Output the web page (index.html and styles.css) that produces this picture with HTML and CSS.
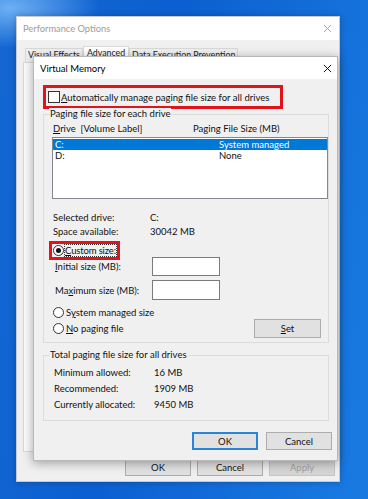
FILE: index.html
```html
<!DOCTYPE html>
<html>
<head>
<meta charset="utf-8">
<link rel="stylesheet" href="styles.css">
</head>
<body>
<div class="desktop">
  <div class="win po">
    <div class="po-title">
      <span>Performance Options</span>
      <svg class="close close-dim" viewBox="0 0 10 10"><path d="M1 1L9 9M9 1L1 9"/></svg>
    </div>
    <div class="po-body">
      <div class="tabs">
        <span class="tab">Visual Effects</span>
        <span class="tab active">Advanced</span>
        <span class="tab">Data Execution Prevention</span>
      </div>
      <div class="tabpage"></div>
      <div class="po-buttons">
        <span class="btn po-btn">OK</span>
        <span class="btn po-btn">Cancel</span>
        <span class="btn po-btn disabled">Apply</span>
      </div>
    </div>
  </div>

  <div class="win vm">
    <div class="vm-title">
      <span>Virtual Memory</span>
      <svg class="close" viewBox="0 0 10 10"><path d="M1 1L9 9M9 1L1 9"/></svg>
    </div>
    <div class="vm-body">
      <div class="auto-box">
        <span class="checkbox"></span>
        <span><u>A</u>utomatically manage paging file size for all drives</span>
      </div>

      <div class="group group-drive">
        <div class="group-title">Paging file size for each drive</div>
        <div class="list-head">
          <span class="col1"><u>D</u>rive&nbsp; [Volume Label]</span>
          <span>Paging File Size (MB)</span>
        </div>
        <div class="listbox">
          <div class="list-row selected"><span class="lcol1">C:</span><span>System managed</span></div>
          <div class="list-row"><span class="lcol1">D:</span><span>None</span></div>
        </div>
        <div class="info-row info-first"><span class="info-label">Selected drive:</span><span>C:</span></div>
        <div class="info-row"><span class="info-label">Space available:</span><span>30042 MB</span></div>

        <div class="custom-box">
          <span class="radio checked"></span>
          <span class="focus-text"><u>C</u>ustom size:</span>
        </div>
        <div class="size-row size-initial">
          <span class="size-label"><u>I</u>nitial size (MB):</span>
          <span class="textbox"></span>
        </div>
        <div class="size-row size-max">
          <span class="size-label">Ma<u>x</u>imum size (MB):</span>
          <span class="textbox"></span>
        </div>
        <div class="radio-row sys-row">
          <span class="radio"></span>
          <span>S<u>y</u>stem managed size</span>
        </div>
        <div class="radio-row nopage-row">
          <span class="radio"></span>
          <span class="nopage-text"><u>N</u>o paging file</span>
          <span class="btn set-btn"><u>S</u>et</span>
        </div>
      </div>

      <div class="group group-total">
        <div class="group-title">Total paging file size for all drives</div>
        <div class="total-rows">
          <span class="total-label">Minimum allowed:</span><span>16 MB</span>
          <span class="total-label">Recommended:</span><span>1909 MB</span>
          <span class="total-label">Currently allocated:</span><span>9450 MB</span>
        </div>
      </div>

      <div class="vm-buttons">
        <span class="btn default">OK</span>
        <span class="btn">Cancel</span>
      </div>
    </div>
  </div>
</div>
</body>
</html>
```

FILE: styles.css
```css
* { box-sizing: border-box; }
html, body { margin: 0; padding: 0; }
body {
  width: 368px;
  height: 499px;
  overflow: hidden;
  font-family: Lato, "Noto Sans", sans-serif;
  font-size: 9.5px;
  color: #111;
}
u { text-decoration-thickness: 1px; text-underline-offset: 1px; }

.desktop {
  position: relative;
  width: 368px;
  height: 499px;
  background:
    radial-gradient(ellipse 90px 40px at 10px 8px, rgba(140, 200, 255, 0.75), rgba(140, 200, 255, 0) 100%),
    linear-gradient(100deg, #1467d2 0%, #0c5fd0 40%, #1572dc 80%, #1a7ae2 100%);
}

.win { position: absolute; }

/* ---------- Performance Options (background window) ---------- */
.po {
  left: 16px;
  top: 16px;
  width: 324px;
  height: 466px;
  background: #f0f0f0;
  border: 1px solid #c9c9c9;
  box-shadow: 0 0 6px rgba(0, 0, 0, 0.25);
  display: flex;
  flex-direction: column;
}
.po-title {
  height: 23px;
  background: #fff;
  display: flex;
  align-items: center;
  justify-content: space-between;
  padding: 0 6px 0 6px;
  color: #9c9c9c;
  font-size: 9.3px;
}
.close {
  width: 9px;
  height: 9px;
  stroke: #111;
  stroke-width: 1.1;
  fill: none;
}
.close-dim { stroke: #a8a8a8; margin-right: 1px; }

.po-body {
  flex: 1;
  display: flex;
  flex-direction: column;
  padding: 6px 4px 5px 6px;
}
.tabs {
  height: 16px;
  display: flex;
  align-items: flex-start;
  padding-left: 2px;
  font-size: 8.8px;
}
.tab {
  margin-top: 2px;
  height: 14px;
  padding: 0 2px;
  border: 1px solid #d9d9d9;
  border-bottom: none;
  background: #f0f0f0;
  line-height: 12px;
  color: #222;
  white-space: nowrap;
}
.tab.active {
  margin-top: 0;
  height: 16px;
  background: #fff;
  padding: 0 3px;
  line-height: 11px;
}
.tabpage {
  flex: 1;
  background: #fbfbfb;
  border: 1px solid #d9d9d9;
  margin-right: 2px;
}
.po-buttons {
  margin-top: 6px;
  display: flex;
  justify-content: flex-end;
  gap: 6px;
}
.po-btn { width: 57px; }

/* ---------- Buttons ---------- */
.btn {
  display: flex;
  align-items: center;
  justify-content: center;
  height: 18px;
  width: 66px;
  background: #e1e1e1;
  border: 1px solid #adadad;
  color: #111;
}
.btn.default { border: 2px solid #2a84d8; }
.btn.disabled { color: #a0a0a0; background: #d6d6d6; border-color: #c4c4c4; }

/* ---------- Virtual Memory dialog ---------- */
.vm {
  left: 33px;
  top: 56px;
  width: 305px;
  height: 405px;
  background: #f0f0f0;
  border: 1px solid #b9b9b9;
  box-shadow: 0 2px 10px rgba(0, 0, 0, 0.35);
  display: flex;
  flex-direction: column;
}
.vm-title {
  height: 22px;
  flex: none;
  background: #fff;
  display: flex;
  align-items: center;
  justify-content: space-between;
  padding: 0 5px 0 6px;
  font-size: 9.5px;
  color: #000;
}
.vm-body {
  flex: 1;
  padding: 6px 8px 0 9px;
  display: flex;
  flex-direction: column;
}

.auto-box {
  width: 240px;
  height: 24px;
  border: 3px solid #e1141c;
  display: flex;
  align-items: center;
  padding-left: 2px;
  gap: 1px;
  white-space: nowrap;
}
.checkbox {
  width: 12px;
  height: 12px;
  background: #fff;
  border: 1px solid #333;
  flex: none;
}

.group {
  border: 1px solid #dcdcdc;
  display: flex;
  flex-direction: column;
  align-items: flex-start;
}
.group-title {
  margin: -7px 0 0 -3px;
  padding: 0 1px;
  line-height: 12px;
  background: #f0f0f0;
  white-space: nowrap;
}
.group-drive {
  margin-top: 5px;
  padding: 0 0 4px 8px;
}
.list-head {
  margin-top: 3px;
  line-height: 12px;
  padding-left: 1px;
  display: flex;
  white-space: nowrap;
}
.col1 { width: 140px; }
.listbox {
  margin-top: 2px;
  align-self: stretch;
  height: 62px;
  background: #fff;
  border: 1px solid #828790;
  padding-top: 1px;
}
.list-row {
  height: 11px;
  line-height: 11px;
  padding-left: 2px;
  display: flex;
}
.list-row.selected { background: #0078d7; color: #fff; }
.lcol1 { width: 164px; }

.info-row { display: flex; line-height: 14px; padding-left: 1px; white-space: nowrap; }
.info-first { margin-top: 12px; }
.info-label { width: 97px; }

.custom-box {
  margin: 2px 0 0 -3px;
  width: 71px;
  height: 19px;
  border: 3px solid #e1141c;
  display: flex;
  align-items: center;
  padding-left: 1px;
  gap: 1px;
  white-space: nowrap;
}
.radio {
  width: 11px;
  height: 11px;
  border: 1px solid #333;
  border-radius: 50%;
  background: #fff;
  flex: none;
  display: flex;
  align-items: center;
  justify-content: center;
}
.radio.checked::after {
  content: "";
  width: 5px;
  height: 5px;
  border-radius: 50%;
  background: #111;
}
.focus-text {
  flex: none;
  outline: 1px dotted #333;
  outline-offset: 0;
  padding: 0;
  line-height: 11px;
  letter-spacing: -0.15px;
  white-space: nowrap;
}

.size-row { display: flex; align-items: center; padding-left: 3px; white-space: nowrap; }
.size-initial { margin-top: -3px; height: 19px; }
.size-max { margin-top: 4px; height: 20px; }
.size-label { width: 97px; }
.textbox {
  width: 68px;
  height: 100%;
  background: #fff;
  border: 1px solid #7a7a7a;
}

.radio-row { display: flex; align-items: center; gap: 2px; padding-left: 1px; white-space: nowrap; }
.sys-row { margin-top: 5px; height: 14px; }
.nopage-row { height: 19px; align-self: stretch; }
.nopage-text { flex: 1; }
.set-btn { width: 67px; height: 19px; margin-right: 7px; }

.group-total {
  margin-top: 12px;
  padding: 0 0 7px 8px;
}
.total-rows {
  margin-top: 4px;
  padding-left: 2px;
  display: grid;
  grid-template-columns: 100px auto;
  line-height: 16px;
  white-space: nowrap;
}

.vm-buttons {
  margin: 11px -3px 0 0;
  display: flex;
  justify-content: flex-end;
  gap: 8px;
}
```
